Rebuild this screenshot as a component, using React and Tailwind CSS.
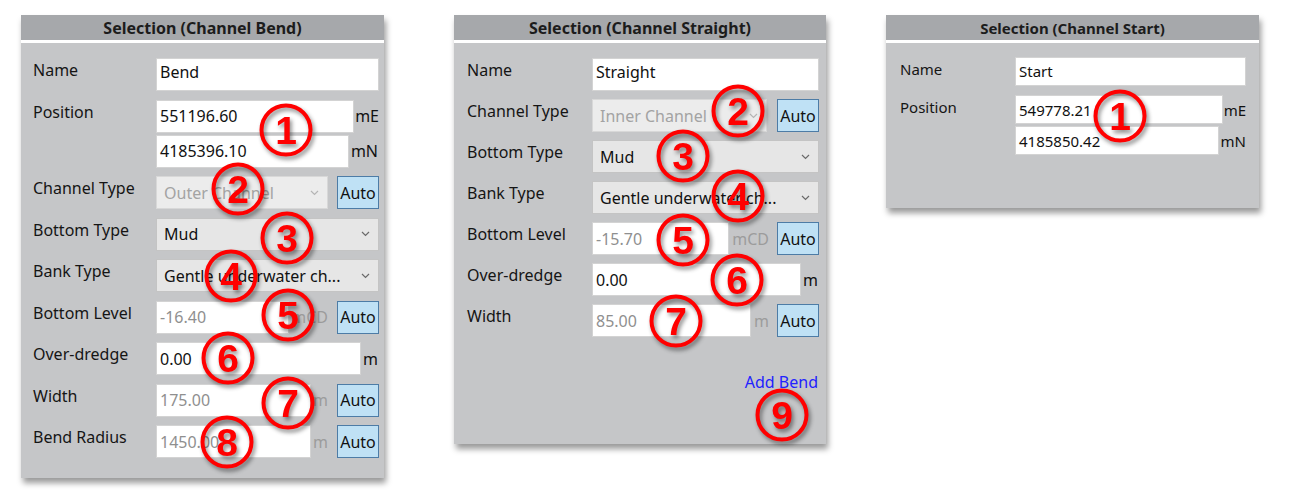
import React from "react";

const FONT = "font-['Noto_Sans',sans-serif]";

function Chevron({ gray }) {
  return (
    <svg width="9" height="6" viewBox="0 0 9 6" className="shrink-0">
      <polyline points="1,1 4.5,4.5 8,1" fill="none" stroke={gray ? "#b5b5b5" : "#6a6a6a"} strokeWidth="1.2" />
    </svg>
  );
}

function TextBox({ value, gray, top, h = "h-[33px]", fs = "text-[16px]", className = "" }) {
  return (
    <div
      className={`${h} ${fs} flex-1 min-w-0 bg-white border border-[#d3d3d3] flex pl-[3px] leading-[20px] ${
        top ? "items-start pt-[3px]" : "items-center"
      } ${gray ? "text-[#8f8f8f]" : "text-[#111]"} ${className}`}
    >
      {value}
    </div>
  );
}

function Select({ value, disabled, className = "" }) {
  return (
    <div
      className={`h-[33px] text-[16px] leading-[20px] flex items-center justify-between pl-[7px] pr-[8px] border ${
        disabled ? "bg-[#ececec] border-[#d8d8d8] text-[#a3a3a3]" : "bg-[#e6e6e6] border-[#c4c4c4] text-[#111]"
      } ${className}`}
    >
      <span className="whitespace-nowrap overflow-hidden">{value}</span>
      <Chevron gray={disabled} />
    </div>
  );
}

function Auto() {
  return (
    <div className="w-[42px] h-[33px] shrink-0 bg-[#bfe1f5] border border-[#4d7ca6] flex items-center justify-center text-[16px] leading-[20px] text-[#111]">
      Auto
    </div>
  );
}

function Unit({ children, gray, fs = "text-[16px]", className = "" }) {
  return (
    <span className={`${fs} leading-[20px] shrink-0 ${gray ? "text-[#9c9c9c]" : "text-[#111]"} ${className}`}>
      {children}
    </span>
  );
}

function Row({ label, labelW, fs = "text-[16px]", children }) {
  return (
    <div className="flex items-start">
      <div className={`${labelW} shrink-0 ${fs} leading-[20px] pt-[2px] text-[#151515]`}>{label}</div>
      <div className="flex-1 min-w-0">{children}</div>
    </div>
  );
}

function Header({ title, fs = "text-[16px]" }) {
  return (
    <div>
      <div className={`h-[25px] bg-[#a6a8ab] flex items-center justify-center font-bold ${fs} text-[#1c1c1c] leading-[20px]`}>
        {title}
      </div>
      <div className="h-[3px] bg-white" />
    </div>
  );
}

function Circle({ n, x, y }) {
  return (
    <svg
      width="58"
      height="58"
      viewBox="0 0 58 58"
      className="absolute drop-shadow-[2px_3px_2px_rgba(0,0,0,0.45)]"
      style={{ left: x - 29, top: y - 29 }}
    >
      <circle cx="29" cy="29" r="24.5" fill="none" stroke="#ff0000" strokeWidth="4" />
      <text
        x="29"
        y="43"
        textAnchor="middle"
        fill="#ff0000"
        fontFamily="'Liberation Sans', Arial, sans-serif"
        fontWeight="bold"
        fontSize="39"
      >
        {n}
      </text>
    </svg>
  );
}

function PanelBend() {
  const lw = "w-[123px]";
  return (
    <div className="w-[363px] h-[463px] bg-[#c5c6c8] shadow-[2px_5px_6px_rgba(0,0,0,0.4)] shrink-0">
      <Header title="Selection (Channel Bend)" />
      <div className="pl-[12px] pr-[5px] pt-[15px] flex flex-col gap-[8.5px]">
        <Row label="Name" labelW={lw}>
          <div className="flex"><TextBox value="Bend" top /></div>
        </Row>
        <Row label="Position" labelW={lw}>
          <div className="flex flex-col gap-[2px]">
            <div className="flex items-center gap-[1px]"><TextBox value="551196.60" /><Unit>mE</Unit></div>
            <div className="flex items-center gap-[2px] pr-[1px]"><TextBox value="4185396.10" /><Unit>mN</Unit></div>
          </div>
        </Row>
        <Row label="Channel Type" labelW={lw}>
          <div className="flex items-center gap-[9px]">
            <Select value="Outer Channel" disabled className="flex-1" />
            <Auto />
          </div>
        </Row>
        <Row label="Bottom Type" labelW={lw}>
          <Select value="Mud" />
        </Row>
        <Row label="Bank Type" labelW={lw}>
          <Select value="Gentle underwater ch..." />
        </Row>
        <Row label="Bottom Level" labelW={lw}>
          <div className="flex items-center">
            <TextBox value="-16.40" gray />
            <Unit gray className="ml-[2px]">mCD</Unit>
            <div className="ml-[9px]"><Auto /></div>
          </div>
        </Row>
        <Row label="Over-dredge" labelW={lw}>
          <div className="flex items-center gap-[2px] pr-[1px]"><TextBox value="0.00" /><Unit>m</Unit></div>
        </Row>
        <Row label="Width" labelW={lw}>
          <div className="flex items-center">
            <TextBox value="175.00" gray />
            <Unit gray className="ml-[2px]">m</Unit>
            <div className="ml-[9px]"><Auto /></div>
          </div>
        </Row>
        <Row label="Bend Radius" labelW={lw}>
          <div className="flex items-center">
            <TextBox value="1450.00" gray />
            <Unit gray className="ml-[2px]">m</Unit>
            <div className="ml-[9px]"><Auto /></div>
          </div>
        </Row>
      </div>
    </div>
  );
}

function PanelStraight() {
  const lw = "w-[125px]";
  return (
    <div className="w-[372px] h-[429px] bg-[#c5c6c8] shadow-[2px_5px_6px_rgba(0,0,0,0.4)] shrink-0">
      <Header title="Selection (Channel Straight)" />
      <div className="pl-[13px] pr-[7px] pt-[15px] flex flex-col gap-[8px]">
        <Row label="Name" labelW={lw}>
          <div className="flex"><TextBox value="Straight" top /></div>
        </Row>
        <Row label="Channel Type" labelW={lw}>
          <div className="flex items-center gap-[10px]">
            <Select value="Inner Channel" disabled className="flex-1" />
            <Auto />
          </div>
        </Row>
        <Row label="Bottom Type" labelW={lw}>
          <Select value="Mud" />
        </Row>
        <Row label="Bank Type" labelW={lw}>
          <Select value="Gentle underwater ch..." />
        </Row>
        <Row label="Bottom Level" labelW={lw}>
          <div className="flex items-center">
            <TextBox value="-15.70" gray />
            <Unit gray className="ml-[3px]">mCD</Unit>
            <div className="ml-[8px]"><Auto /></div>
          </div>
        </Row>
        <Row label="Over-dredge" labelW={lw}>
          <div className="flex items-center gap-[2px] pr-[1px]"><TextBox value="0.00" /><Unit>m</Unit></div>
        </Row>
        <Row label="Width" labelW={lw}>
          <div className="flex items-center">
            <TextBox value="85.00" gray />
            <Unit gray className="ml-[3px]">m</Unit>
            <div className="ml-[8px]"><Auto /></div>
          </div>
        </Row>
        <div className="mt-[27px] flex justify-end pr-[1px]">
          <span className="text-[16px] leading-[20px] text-[#2222ff]">Add Bend</span>
        </div>
      </div>
    </div>
  );
}

function PanelStart() {
  const lw = "w-[115px]";
  const fs = "text-[15px]";
  return (
    <div className="w-[373px] h-[193px] bg-[#c5c6c8] shadow-[2px_5px_6px_rgba(0,0,0,0.4)] shrink-0">
      <Header title="Selection (Channel Start)" fs={fs} />
      <div className="pl-[14px] pr-[13px] pt-[14px] flex flex-col gap-[9px]">
        <Row label="Name" labelW={lw} fs={fs}>
          <div className="flex"><TextBox value="Start" top h="h-[29px]" fs={fs} /></div>
        </Row>
        <Row label="Position" labelW={lw} fs={fs}>
          <div className="flex flex-col gap-[2px]">
            <div className="flex items-center gap-[1px]"><TextBox value="549778.21" h="h-[29px]" fs={fs} /><Unit fs={fs}>mE</Unit></div>
            <div className="flex items-center gap-[2px]"><TextBox value="4185850.42" h="h-[29px]" fs={fs} /><Unit fs={fs}>mN</Unit></div>
          </div>
        </Row>
      </div>
    </div>
  );
}

export default function App() {
  return (
    <div className={`relative w-[1292px] h-[502px] bg-white overflow-hidden ${FONT}`}>
      <div className="flex items-start pt-[15px] pl-[21px]">
        <PanelBend />
        <div className="ml-[70px]"><PanelStraight /></div>
        <div className="ml-[60px]"><PanelStart /></div>
      </div>
      <Circle n="1" x={286} y={130} />
      <Circle n="2" x={238} y={189} />
      <Circle n="3" x={287} y={238} />
      <Circle n="4" x={231} y={276} />
      <Circle n="5" x={288} y={315} />
      <Circle n="6" x={228} y={358} />
      <Circle n="7" x={288} y={403} />
      <Circle n="8" x={227} y={442} />

      <Circle n="2" x={738} y={111} />
      <Circle n="3" x={683} y={156} />
      <Circle n="4" x={738} y={196} />
      <Circle n="5" x={683} y={240} />
      <Circle n="6" x={737} y={280} />
      <Circle n="7" x={676} y={321} />
      <Circle n="9" x={782} y={415} />

      <Circle n="1" x={1120} y={116} />
    </div>
  );
}
